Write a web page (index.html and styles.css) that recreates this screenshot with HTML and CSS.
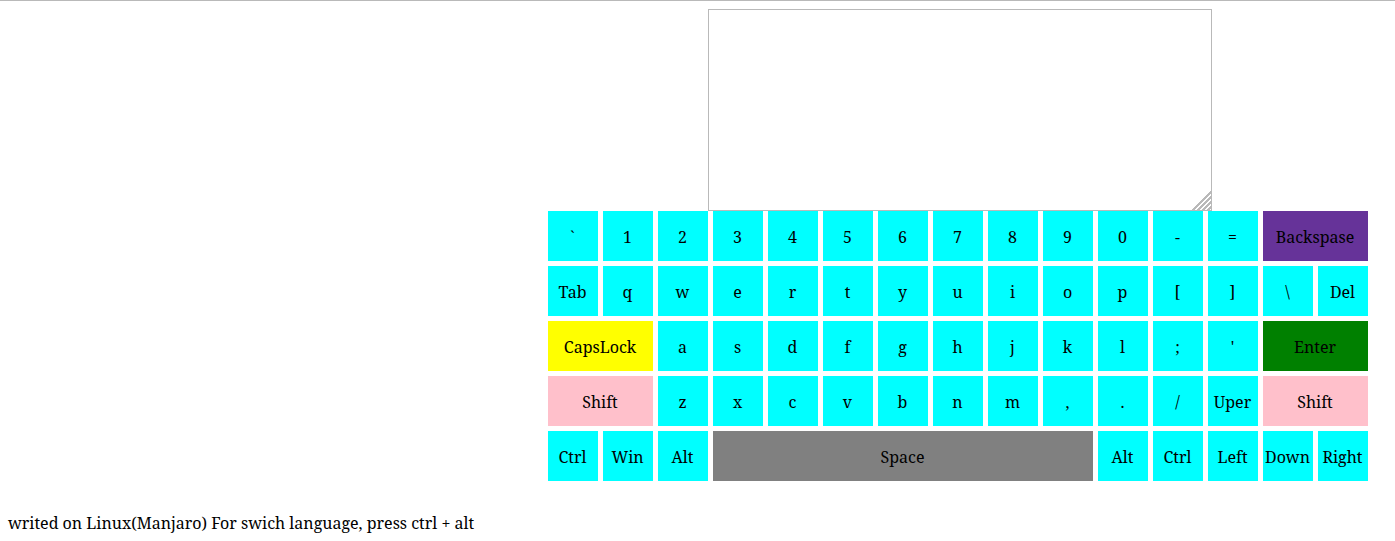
FILE: index.html
```html
<!DOCTYPE html>
<html lang="en">
<head>
<meta charset="utf-8">
<title>Virtual keyboard</title>
<link rel="stylesheet" href="styles.css">
</head>
<body>
<main class="app">
<div class="screen"><textarea class="output" aria-label="Output"></textarea><svg class="grip" viewBox="0 0 20 20" aria-hidden="true"><path d="M0 20L20 0M5 20L20 5M10 20L20 10M15 20L20 15"/></svg></div>
<div class="keyboard">
<button class="key">`</button><button class="key">1</button><button class="key">2</button><button class="key">3</button><button class="key">4</button><button class="key">5</button><button class="key">6</button><button class="key">7</button><button class="key">8</button><button class="key">9</button><button class="key">0</button><button class="key">-</button><button class="key">=</button><button class="key wide backspace">Backspase</button>
<button class="key">Tab</button><button class="key">q</button><button class="key">w</button><button class="key">e</button><button class="key">r</button><button class="key">t</button><button class="key">y</button><button class="key">u</button><button class="key">i</button><button class="key">o</button><button class="key">p</button><button class="key">[</button><button class="key">]</button><button class="key">\</button><button class="key">Del</button>
<button class="key wide caps">CapsLock</button><button class="key">a</button><button class="key">s</button><button class="key">d</button><button class="key">f</button><button class="key">g</button><button class="key">h</button><button class="key">j</button><button class="key">k</button><button class="key">l</button><button class="key">;</button><button class="key">'</button><button class="key wide enter">Enter</button>
<button class="key wide shift">Shift</button><button class="key">z</button><button class="key">x</button><button class="key">c</button><button class="key">v</button><button class="key">b</button><button class="key">n</button><button class="key">m</button><button class="key">,</button><button class="key">.</button><button class="key">/</button><button class="key">Uper</button><button class="key wide shift">Shift</button>
<button class="key">Ctrl</button><button class="key">Win</button><button class="key">Alt</button><button class="key space">Space</button><button class="key">Alt</button><button class="key">Ctrl</button><button class="key">Left</button><button class="key">Down</button><button class="key">Right</button>
</div>
</main>
<p class="note">writed on Linux(Manjaro) For swich language, press ctrl + alt</p>
</body>
</html>
```
FILE: styles.css
```css
body {
  margin: 0;
  padding: 8px;
  border-top: 1px solid #b9b9b9;
  background: #fff;
  color: #000;
  font: 16px/22px "Noto Serif", "Droid Serif", "DejaVu Serif", serif;
}

.app {
  display: flex;
  flex-direction: column;
  align-items: center;
  width: fit-content;
  margin-left: auto;
  margin-right: 19px;
}

.screen {
  position: relative;
  display: flex;
  margin-left: 4px;
}

.output {
  box-sizing: border-box;
  width: 504px;
  height: 202px;
  border: 1px solid #b9b9b9;
  background: #fff;
  resize: none;
  outline: none;
}

.grip {
  position: absolute;
  right: 0;
  bottom: 0;
  width: 20px;
  height: 20px;
  fill: none;
  stroke: #b9b9b9;
  stroke-width: 1.6;
  shape-rendering: crispEdges;
}

.keyboard {
  display: grid;
  grid-template-columns: repeat(15, 50px);
  grid-auto-rows: 50px;
  gap: 5px;
}

.key {
  min-width: 0;
  padding: 2px 1px 0 0;
  border: 0;
  background: aqua;
  color: inherit;
  font: inherit;
}

.wide { grid-column: span 2; }
.space { grid-column: span 7; background: gray; }
.backspace { background: rebeccapurple; }
.caps { background: yellow; }
.enter { background: green; }
.shift { background: pink; }

.note { margin: 31px 0 0; }
```
